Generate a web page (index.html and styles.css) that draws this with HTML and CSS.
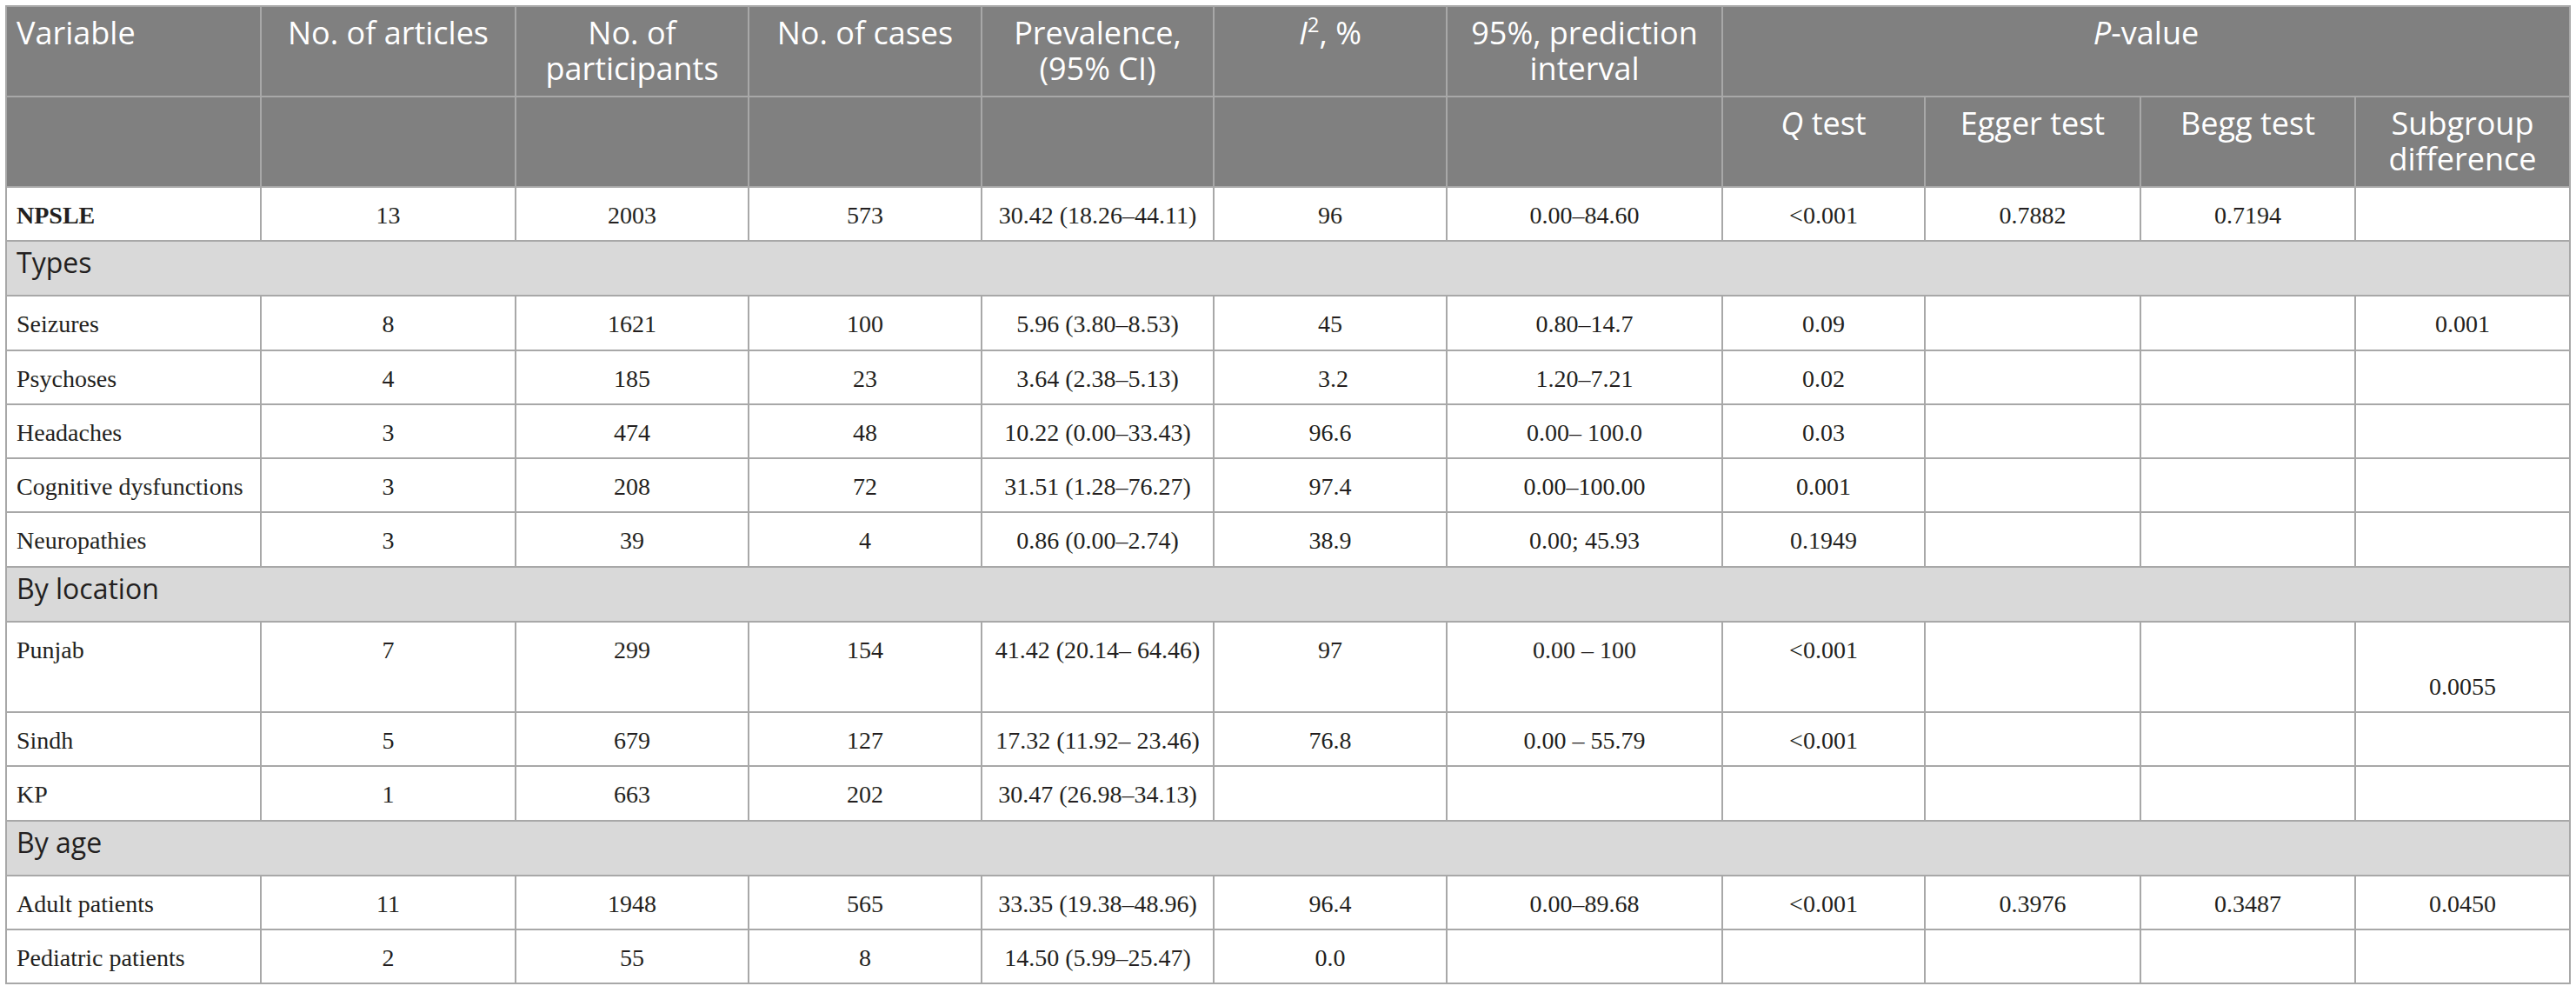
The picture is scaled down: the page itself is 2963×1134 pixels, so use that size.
FILE: index.html
```html
<!DOCTYPE html>
<html lang="en">
<head>
<meta charset="utf-8">
<title>NPSLE prevalence table</title>
<link rel="stylesheet" href="styles.css">
</head>
<body>
<table class="data">
  <colgroup>
    <col class="c-var"><col class="c-art"><col class="c-part"><col class="c-case"><col class="c-prev"><col class="c-i2"><col class="c-pred"><col class="c-q"><col class="c-egg"><col class="c-begg"><col class="c-sub">
  </colgroup>
  <thead>
    <tr>
      <th class="left">Variable</th>
      <th>No. of articles</th>
      <th>No. of participants</th>
      <th>No. of cases</th>
      <th>Prevalence, (95% CI)</th>
      <th><i>I</i><sup>2</sup>, %</th>
      <th>95%, prediction interval</th>
      <th colspan="4"><i>P</i>-value</th>
    </tr>
    <tr>
      <th></th><th></th><th></th><th></th><th></th><th></th><th></th>
      <th><i>Q</i> test</th>
      <th>Egger test</th>
      <th>Begg test</th>
      <th>Subgroup difference</th>
    </tr>
  </thead>
  <tbody>
    <tr>
      <td class="left"><b>NPSLE</b></td><td>13</td><td>2003</td><td>573</td><td>30.42 (18.26–44.11)</td><td>96</td><td>0.00–84.60</td><td>&lt;0.001</td><td>0.7882</td><td>0.7194</td><td></td>
    </tr>
    <tr class="section"><td colspan="11">Types</td></tr>
    <tr>
      <td class="left">Seizures</td><td>8</td><td>1621</td><td>100</td><td>5.96 (3.80–8.53)</td><td>45</td><td>0.80–14.7</td><td>0.09</td><td></td><td></td><td>0.001</td>
    </tr>
    <tr>
      <td class="left">Psychoses</td><td>4</td><td>185</td><td>23</td><td>3.64 (2.38–5.13)</td><td>&nbsp;3.2</td><td>1.20–7.21</td><td>0.02</td><td></td><td></td><td></td>
    </tr>
    <tr>
      <td class="left">Headaches</td><td>3</td><td>474</td><td>48</td><td>10.22 (0.00–33.43)</td><td>96.6</td><td>0.00– 100.0</td><td>0.03</td><td></td><td></td><td></td>
    </tr>
    <tr>
      <td class="left">Cognitive dysfunctions</td><td>3</td><td>208</td><td>72</td><td>31.51 (1.28–76.27)</td><td>97.4</td><td>0.00–100.00</td><td>0.001</td><td></td><td></td><td></td>
    </tr>
    <tr>
      <td class="left">Neuropathies</td><td>3</td><td>39</td><td>4</td><td>0.86 (0.00–2.74)</td><td>38.9</td><td>0.00; 45.93</td><td>0.1949</td><td></td><td></td><td></td>
    </tr>
    <tr class="section"><td colspan="11">By location</td></tr>
    <tr>
      <td class="left">Punjab</td><td>7</td><td>299</td><td>154</td><td>41.42 (20.14– 64.46)</td><td>97</td><td>0.00 – 100</td><td>&lt;0.001</td><td></td><td></td><td><br>0.0055</td>
    </tr>
    <tr>
      <td class="left">Sindh</td><td>5</td><td>679</td><td>127</td><td>17.32 (11.92– 23.46)</td><td>76.8</td><td>0.00 – 55.79</td><td>&lt;0.001</td><td></td><td></td><td></td>
    </tr>
    <tr>
      <td class="left">KP</td><td>1</td><td>663</td><td>202</td><td>30.47 (26.98–34.13)</td><td></td><td></td><td></td><td></td><td></td><td></td>
    </tr>
    <tr class="section"><td colspan="11">By age</td></tr>
    <tr>
      <td class="left">Adult patients</td><td>11</td><td>1948</td><td>565</td><td>33.35 (19.38–48.96)</td><td>96.4</td><td>0.00–89.68</td><td>&lt;0.001</td><td>0.3976</td><td>0.3487</td><td>0.0450</td>
    </tr>
    <tr>
      <td class="left">Pediatric patients</td><td>2</td><td>55</td><td>8</td><td>14.50 (5.99–25.47)</td><td>0.0</td><td></td><td></td><td></td><td></td><td></td>
    </tr>
  </tbody>
</table>
</body>
</html>
```

FILE: styles.css
```css
html, body {
  margin: 0;
  padding: 0;
  background: #ffffff;
}

body {
  padding: 6px 0 0 6px;
}

.data {
  border-collapse: collapse;
  table-layout: fixed;
  width: 2951px;
  color: #231f20;
}

.c-var { width: 293px; }
.c-art { width: 293px; }
.c-part { width: 268px; }
.c-case { width: 268px; }
.c-prev { width: 267px; }
.c-i2 { width: 268px; }
.c-pred { width: 317px; }
.c-q { width: 233px; }
.c-egg { width: 248px; }
.c-begg { width: 247px; }
.c-sub { width: 247px; }

.data th,
.data td {
  border: 2px solid #a8a8a8;
  text-align: center;
  vertical-align: top;
}

.data th {
  background: #808080;
  color: #ffffff;
  font-family: "Open Sans", "DejaVu Sans", sans-serif;
  font-weight: 400;
  font-size: 36px;
  line-height: 41px;
  padding: 9px 12px 11px;
}

.data th sup {
  font-size: 24px;
  line-height: 0;
  vertical-align: 14px;
}

.data td {
  font-family: "Liberation Serif", "Times New Roman", serif;
  font-size: 28px;
  line-height: 42px;
  padding: 11px 12px 7.3px;
}

.data .left {
  text-align: left;
}

.data td.left {
  padding-left: 11px;
}

.data th.left {
  padding-left: 11px;
}

.data tr.section td {
  background: #d9d9d9;
  text-align: left;
  font-family: "Open Sans", "DejaVu Sans", sans-serif;
  font-size: 32px;
  line-height: 42px;
  padding: 3px 11px 16px;
}
```
